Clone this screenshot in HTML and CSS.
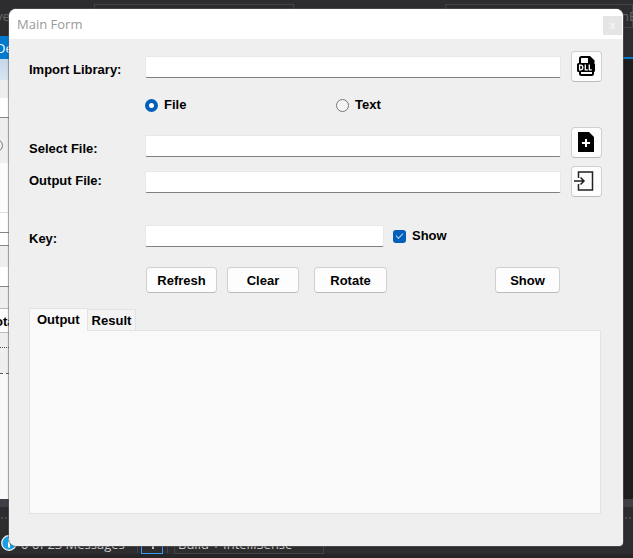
FILE: index.html
```html
<!DOCTYPE html>
<html lang="en">
<head>
<meta charset="utf-8">
<title>Main Form</title>
<link rel="stylesheet" href="styles.css">
</head>
<body>
<div class="desktop">
  <div class="backdrop" aria-hidden="true">
    <div class="ide-bar">
      <span class="ide-clip">ve</span>
      <span class="ide-box"></span>
      <span class="ide-box ide-box-right"></span>
      <span class="ide-end">nE</span>
    </div>
    <div class="ide-work">
      <div class="designer">
        <div class="doc-tab">De</div>
        <div class="doc-head"></div>
        <div class="doc-gap"></div>
        <div class="doc-field"></div>
        <div class="doc-radio"><i></i></div>
        <div class="doc-list"></div>
        <div class="doc-blank"></div>
        <div class="doc-line"></div>
        <div class="doc-space"></div>
        <div class="doc-field"></div>
        <div class="doc-space"></div>
        <div class="doc-button">ota</div>
        <div class="doc-tabs"></div>
        <div class="doc-page"></div>
      </div>
      <div class="editor"></div>
    </div>
    <div class="splitter"></div>
    <div class="ide-list">
      <div class="grip"><i></i><i></i></div>
      <div class="messages">
        <svg class="info" width="16" height="16" viewBox="0 0 16 16"><circle cx="8" cy="8" r="7.3" fill="#1ba1e2" stroke="#f4f4f4" stroke-width="1.3"/><path d="M8 6.500v6M8 3.500v1.800" stroke="#fff" stroke-width="2"/></svg>
        <span class="count">0 of 23 Messages</span>
        <span class="rule"></span>
        <span class="filter"><svg width="20" height="20" viewBox="0 0 20 20"><path d="M4 5h14l-6 5v6h-2v-6z" fill="#c8c8c8"/></svg></span>
        <span class="rule"></span>
        <span class="source">Build + IntelliSense</span>
      </div>
      <div class="ide-foot"></div>
    </div>
  </div>

  <main class="dialog">
    <header class="titlebar">
      <h1>Main Form</h1>
      <button class="close" type="button" aria-label="Close">x</button>
    </header>
    <form class="form">
      <div class="row">
        <label for="library">Import Library:</label>
        <input class="text" id="library" type="text">
        <button class="icon-button" type="button" aria-label="Choose library">
          <svg width="20" height="20" viewBox="0 0 20 20">
            <path d="M4 7V2.500Q4 1 5.500 1H13l4 4v2" fill="none" stroke="#000" stroke-width="2"/>
            <path d="M12 0h2l4.500 4.500V7H12z"/>
            <rect x="1" y="7" width="18" height="9" rx="1.500"/>
            <path d="M4 15v2.500Q4 19 5.500 19h10q1.500 0 1.500-1.500V15" fill="none" stroke="#000" stroke-width="2"/>
            <g fill="none" stroke="#fff" stroke-width="1.300"><path d="M3.600 9.200v4.600h1q2.200 0 2.200-2.300T4.600 9.200z"/><path d="M9.300 8.500v5.300h2.500M13.300 8.500v5.300h2.500"/></g>
          </svg>
        </button>
      </div>

      <div class="choices">
        <label class="choice"><input type="radio" name="source" checked>File</label>
        <label class="choice"><input type="radio" name="source">Text</label>
      </div>

      <div class="row row-low">
        <label for="file">Select File:</label>
        <input class="text" id="file" type="text">
        <button class="icon-button" type="button" aria-label="Select file">
          <svg width="20" height="20" viewBox="0 0 20 20"><path d="M2 0h11l5 5v15H2z"/><path d="M10 7v8M6 11h8" stroke="#fff" stroke-width="2"/></svg>
        </button>
      </div>

      <div class="row row-output">
        <label for="output">Output File:</label>
        <input class="text" id="output" type="text">
        <button class="icon-button" type="button" aria-label="Select output file">
          <svg width="20" height="20" viewBox="0 0 20 20" fill="none" stroke="#222" stroke-width="1.500"><path d="M2.500 7V1h14v18h-14v-6"/><path d="M-2 10H8M4.500 6.500L8 10l-3.500 3.500"/></svg>
        </button>
      </div>

      <div class="row row-key">
        <label for="key">Key:</label>
        <input class="text" id="key" type="text">
        <label class="choice"><input type="checkbox" checked>Show</label>
      </div>

      <div class="actions">
        <button class="push" type="button">Refresh</button>
        <button class="push" type="button">Clear</button>
        <button class="push push-rotate" type="button">Rotate</button>
        <button class="push push-show" type="button">Show</button>
      </div>

      <div class="tabs" role="tablist">
        <button class="tab active" type="button" role="tab" aria-selected="true">Output</button>
        <button class="tab" type="button" role="tab" aria-selected="false">Result</button>
      </div>
      <div class="panel" role="tabpanel"></div>
    </form>
  </main>
</div>
</body>
</html>
```
FILE: styles.css
```css
* { box-sizing: border-box; }

body {
  margin: 0;
  font: bold 13px/16px "Liberation Sans", Arial, sans-serif;
  color: #000;
}

button, input { font: inherit; color: inherit; }

.desktop {
  position: relative;
  display: flex;
  min-height: 100vh;
  padding: 9px 10px 12px 9px;
  overflow: hidden;
  background: #2d2d30;
}

/* IDE behind the dialog */
.backdrop {
  position: absolute;
  inset: 0;
  display: flex;
  flex-direction: column;
  font: 13px/18px "Open Sans", "Noto Sans", sans-serif;
  color: #d0d0d0;
  white-space: nowrap;
}

.ide-bar {
  display: flex;
  height: 36px;
  padding-top: 4px;
  color: #68686b;
}
.ide-clip { width: 98px; padding-top: 3px; margin-left: -4px; }
.ide-box { width: 200px; height: 24px; border: 1px solid #434346; }
.ide-box-right { flex: 1; margin-left: 151px; margin-right: -12px; }
.ide-end { width: 12px; padding-top: 3px; overflow: hidden; }

.ide-work { display: flex; flex: 1; }
.designer {
  display: flex;
  flex-direction: column;
  width: 9px;
  overflow: hidden;
  background: #efefef;
}
.doc-tab { height: 23px; padding-top: 3px; margin-left: -4px; background: #007acc; color: #fff; }
.doc-head { height: 21px; background: linear-gradient(#c8d7e7, #d7e5f3); }
.doc-gap { height: 18px; }
.doc-field { height: 20px; background: #fff; border-bottom: 1px solid #868686; }
.doc-radio { height: 45px; padding-top: 21px; }
.doc-radio i { display: block; width: 13px; height: 13px; margin-left: -10px; border: 1px solid #777; border-radius: 50%; }
.doc-list { height: 50px; background: #fcfcfc; border-bottom: 1px solid #e0e0e0; }
.doc-blank { height: 20px; background: #fff; border-bottom: 1px solid #868686; }
.doc-line { height: 13px; background: #fff; border-bottom: 1px solid #868686; }
.doc-space { height: 21px; }
.doc-button { height: 25px; padding-top: 5px; margin-left: -5px; background: #fdfdfd; border: solid #bbb; border-width: 1px 0; color: #000; font: bold 13px/16px "Liberation Sans", Arial, sans-serif; }
.doc-tabs { height: 15px; border-bottom: 1px dotted #555; }
.doc-page { flex: 1; margin-top: 25px; background: #f9f9f9; border-top: 1px dashed #555; }

.editor { flex: 1; margin-top: 21px; border-top: 2px solid #007acc; background: #1e1e1e; }
.splitter { height: 8px; background: #3f3f46; }

.ide-list { display: flex; flex-direction: column; height: 51px; }
.grip { display: flex; justify-content: space-between; height: 24px; padding-top: 9px; }
.grip i { width: 9px; height: 5px; background: radial-gradient(#4c4c50 1px, transparent 1px) 0 0 / 4px 4px; }
.messages { display: flex; align-items: center; height: 23px; padding-left: 1px; }
.count { width: 116px; padding: 2px 0 0 4px; }
.rule { width: 1px; height: 20px; margin-left: 4px; background: #46464a; }
.filter { display: flex; width: 22px; height: 22px; margin-left: 3px; border: 1px solid #3399ff; }
.source { width: 150px; height: 22px; margin-left: 6px; padding: 2px 0 0 3px; border: 1px solid #434346; }
.ide-foot { flex: 1; background: #252526; }

/* Dialog */
.dialog {
  position: relative;
  flex: 1;
  display: flex;
  flex-direction: column;
  overflow: hidden;
  border-radius: 7px 7px 4px 7px;
  background: #efefef;
  box-shadow: 0 0 0 1px #66666680, 0 0 3px #0004;
}

.titlebar {
  display: flex;
  align-items: center;
  justify-content: space-between;
  height: 30px;
  padding-left: 8px;
  background: #fff;
}
.titlebar h1 { margin: 0; font: 13px/18px "Open Sans", "Noto Sans", sans-serif; color: #999; }
.close {
  width: 19px;
  height: 19px;
  margin: 0 1px 4px 0;
  padding: 0;
  align-self: end;
  border: 0;
  background: #e5e5e5;
  color: #f6f6f6;
  font-size: 10px;
}

.form {
  flex: 1;
  display: flex;
  flex-direction: column;
  padding: 12px 22px 32px 20px;
}

.row {
  display: grid;
  grid-template-columns: 116px 1fr 41px;
  align-items: center;
  margin-right: -1px;
}
.row > .icon-button { margin-left: 10px; }
.row > label:first-child { padding-top: 6px; }
.row-low { margin-top: 14px; }
.row-low > label, .row-low > .text { margin-top: 6px; }
.row-output { margin-top: 8px; }
.row-output > label:first-child { padding: 0 0 2px; }
.row-key { grid-template-columns: 116px 239px auto; margin-top: 28px; }
.row-key .choice { margin-left: 9px; }

.text {
  width: 100%;
  height: 22px;
  padding: 2px 4px;
  border: 1px solid #e8e8e8;
  border-bottom-color: #808080;
  border-radius: 2px;
  background: #fff;
  font-weight: normal;
}

.icon-button, .push {
  display: flex;
  align-items: center;
  justify-content: center;
  padding: 0;
  border: 1px solid #d0d0d0;
  border-bottom-color: #bbb;
  border-radius: 4px;
  background: #fdfdfd;
}
.icon-button { width: 31px; height: 31px; padding: 0 2px 2px 0; }
.icon-button svg { overflow: visible; }

.choices { display: flex; margin: 15px 0 0 116px; }
.choice { display: flex; align-items: center; gap: 6px; }
.choices .choice { width: 191px; }

.choice input { appearance: none; width: 13px; height: 13px; margin: 0; border: 1px solid #777; border-radius: 50%; background: #f4f4f4; }
.choice input[type="radio"]:checked { border: 4px solid #005fb8; background: #fff; }
.choice input[type="checkbox"] {
  border: 0;
  border-radius: 3px;
  background: #005fb8;
  display: grid;
  place-items: center;
}
.choice input[type="checkbox"]:checked::before {
  content: "";
  width: 6px;
  height: 3px;
  margin-bottom: 2px;
  border: solid #b8d4ee;
  border-width: 0 0 1px 1px;
  transform: rotate(-45deg);
}

.actions { display: flex; gap: 10px; margin: 20px 41px 0 117px; }
.push { width: 72px; height: 26px; padding-top: 2px; }
.push:first-child { width: 71px; }
.push-rotate { margin-left: 5px; width: 73px; }
.push-show { width: 65px; margin-left: auto; }

.tabs { display: flex; align-items: flex-end; margin-top: 15px; }
.tab {
  height: 21px;
  padding: 2px 4px 0;
  border: 1px solid #e3e3e3;
  border-left: 0;
  border-bottom: 0;
  background: #f3f3f3;
}
.tab.active {
  height: 23px;
  padding: 0 7px;
  border-left: 1px solid #e3e3e3;
  margin-bottom: -1px;
  position: relative;
  background: #f9f9f9;
}
.panel { flex: 1; min-height: 100px; border: 1px solid #e3e3e3; background: #f9f9f9; }
```
